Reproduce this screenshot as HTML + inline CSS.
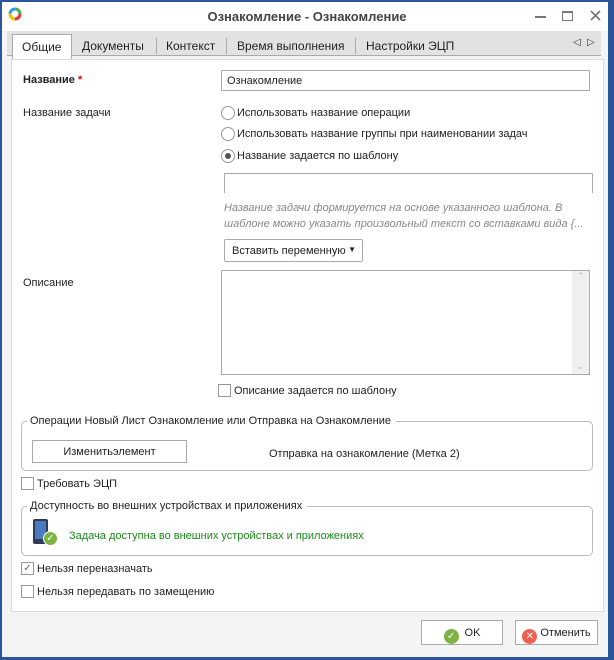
<!DOCTYPE html>
<html><head><meta charset="utf-8"><style>
*{margin:0;padding:0;box-sizing:border-box}
body{width:614px;height:660px;overflow:hidden;background:#2b579a;font-family:"Liberation Sans",sans-serif;font-size:11px;color:#222;position:relative}
.a{position:absolute;white-space:nowrap}
.win{position:absolute;left:2px;top:2px;width:606px;height:655px;background:#f4f4f4}
.t{font-size:11px;line-height:14px}
.cb{position:absolute;width:13px;height:13px;border:1px solid #999;background:#fff}
.rb{position:absolute;width:14px;height:14px;border:1px solid #999;border-radius:50%;background:#fff}
.inp{position:absolute;border:1px solid #aaa;background:#fff}
.grp{position:absolute;border:1px solid #bbb;border-radius:5px}
.leg{position:absolute;background:#fff;padding:0 5px 0 3px;top:-8px;left:5px;line-height:14px}
.btn{position:absolute;border:1px solid #aaa;background:#fff;text-align:center}
</style></head><body>
<div class="win"></div>
<div class="a" style="left:2px;top:2px;width:606px;height:29px;background:#fff"></div>
<svg class="a" style="left:8px;top:7px" width="14" height="14" viewBox="0 0 14 14">
<circle cx="7" cy="7" r="5" fill="none" stroke="#e33" stroke-width="3" stroke-dasharray="8 24"/>
<circle cx="7" cy="7" r="5" fill="none" stroke="#f5c000" stroke-width="3" stroke-dasharray="8 24" stroke-dashoffset="-8"/>
<circle cx="7" cy="7" r="5" fill="none" stroke="#2a9de0" stroke-width="3" stroke-dasharray="8 24" stroke-dashoffset="-16"/>
<circle cx="7" cy="7" r="5" fill="none" stroke="#4caf50" stroke-width="3" stroke-dasharray="8 24" stroke-dashoffset="-24"/>
</svg>
<div class="a" style="left:0;width:614px;top:9px;text-align:center;color:#444;font-weight:bold;font-size:13px;line-height:15px">Ознакомление - Ознакомление</div>
<div class="a" style="left:535px;top:16px;width:11px;height:2px;background:#777"></div>
<div class="a" style="left:562px;top:11px;width:11px;height:10px;border:1px solid #777;border-top-width:2px"></div>
<svg class="a" style="left:590px;top:10px" width="11" height="11"><path d="M1 1L10 10M10 1L1 10" stroke="#777" stroke-width="1.6"/></svg>
<div class="a" style="left:7px;top:31px;width:594px;height:25px;background:#e2e2e2;border-bottom:1px solid #aaa"></div>
<div class="a" style="left:12px;top:34px;width:60px;height:25px;background:#fff;border:1px solid #aaa;border-bottom:none;padding:5px 0 0 9px;font-size:12px;line-height:14px">Общие</div>
<div class="a" style="left:82px;top:39px;font-size:12px;line-height:14px">Документы</div>
<div class="a" style="left:156px;top:38px;width:1px;height:16px;background:#aaa"></div>
<div class="a" style="left:166px;top:39px;font-size:12px;line-height:14px">Контекст</div>
<div class="a" style="left:226px;top:38px;width:1px;height:16px;background:#aaa"></div>
<div class="a" style="left:237px;top:39px;font-size:12px;line-height:14px">Время выполнения</div>
<div class="a" style="left:355px;top:38px;width:1px;height:16px;background:#aaa"></div>
<div class="a" style="left:366px;top:39px;font-size:12px;line-height:14px">Настройки ЭЦП</div>
<div class="a" style="left:573px;top:37px;font-size:10px;color:#333">◁</div>
<div class="a" style="left:587px;top:37px;font-size:10px;color:#333">▷</div>
<div class="a" style="left:11px;top:59px;width:593px;height:553px;background:#fff;border:1px solid #ddd"></div>

<div class="a t" style="left:23px;top:73px;font-weight:bold">Название <span style="color:#e00">*</span></div>
<div class="inp t" style="left:221px;top:70px;width:369px;height:21px;padding:3px 0 0 5px">Ознакомление</div>
<div class="a t" style="left:23px;top:106px">Название задачи</div>
<div class="rb" style="left:221px;top:106px"></div><div class="a t" style="left:237px;top:106px">Использовать название операции</div>
<div class="rb" style="left:221px;top:127px"></div><div class="a t" style="left:237px;top:127px">Использовать название группы при наименовании задач</div>
<div class="rb" style="left:221px;top:149px"><div style="margin:3px;width:6px;height:6px;border-radius:50%;background:#555"></div></div><div class="a t" style="left:237px;top:149px">Название задается по шаблону</div>
<div class="a" style="left:224px;top:173px;width:369px;height:20px;border:1px solid #aaa;border-bottom:none"></div>
<div class="a t" style="left:224px;top:200px;font-style:italic;color:#888;font-size:11px;line-height:16px">Название задачи формируется на основе указанного шаблона. В<br>шаблоне можно указать произвольный текст со вставками вида {...</div>
<div class="btn t" style="left:224px;top:239px;width:139px;height:23px;border-radius:2px;text-align:left;padding:4px 0 0 7px;font-size:11px">Вставить переменную <span style="position:absolute;right:6px;top:3px;font-size:8px">▼</span></div>
<div class="a t" style="left:23px;top:276px">Описание</div>
<div class="inp" style="left:221px;top:270px;width:369px;height:105px"><div style="position:absolute;right:0;top:0;width:17px;height:103px;background:#f0f0f0;color:#bbb;font-size:9px;text-align:center">⌃<div style="position:absolute;bottom:2px;width:17px">⌄</div></div></div>
<div class="cb" style="left:218px;top:384px"></div><div class="a t" style="left:234px;top:384px">Описание задается по шаблону</div>

<div class="grp" style="left:21px;top:421px;width:572px;height:50px"><div class="leg t">Операции Новый Лист Ознакомление или Отправка на Ознакомление</div></div>
<div class="btn t" style="left:32px;top:440px;width:155px;height:23px;padding-top:4px;font-size:11px">Изменитьэлемент</div>
<div class="a t" style="left:269px;top:447px;font-size:11px">Отправка на ознакомление (Метка 2)</div>
<div class="cb" style="left:21px;top:477px"></div><div class="a t" style="left:37px;top:477px">Требовать ЭЦП</div>
<div class="grp" style="left:21px;top:506px;width:572px;height:50px"><div class="leg t">Доступность во внешних устройствах и приложениях</div></div>
<div class="a" style="left:33px;top:519px;width:15px;height:25px;border-radius:2px;background:#2e3a55"><div style="margin:2px;width:11px;height:18px;background:#4a7ac0"></div></div>
<div class="a" style="left:43px;top:531px;width:15px;height:15px;border-radius:50%;background:#7cb342;border:1px solid #fff;color:#fff;font-size:10px;text-align:center;line-height:13px">✓</div>
<div class="a t" style="left:69px;top:529px;color:#1a8a1a;font-size:11px">Задача доступна во внешних устройствах и приложениях</div>
<div class="cb" style="left:21px;top:562px;color:#666;font-size:10px;line-height:11px;text-align:center">✓</div><div class="a t" style="left:37px;top:562px">Нельзя переназначать</div>
<div class="cb" style="left:21px;top:585px"></div><div class="a t" style="left:37px;top:585px">Нельзя передавать по замещению</div>

<div class="btn t" style="left:421px;top:620px;width:82px;height:25px;padding-top:5px"><span style="display:inline-block;width:15px;height:15px;border-radius:50%;background:#7cb342;color:#fff;font-size:10px;line-height:15px;vertical-align:-3px;margin-right:6px">✓</span>OK</div>
<div class="btn t" style="left:515px;top:620px;width:83px;height:25px;padding-top:5px"><span style="display:inline-block;width:15px;height:15px;border-radius:50%;background:#f06050;color:#fff;font-size:10px;line-height:15px;vertical-align:-3px;margin-right:3px">✕</span>Отменить</div>
</body></html>
